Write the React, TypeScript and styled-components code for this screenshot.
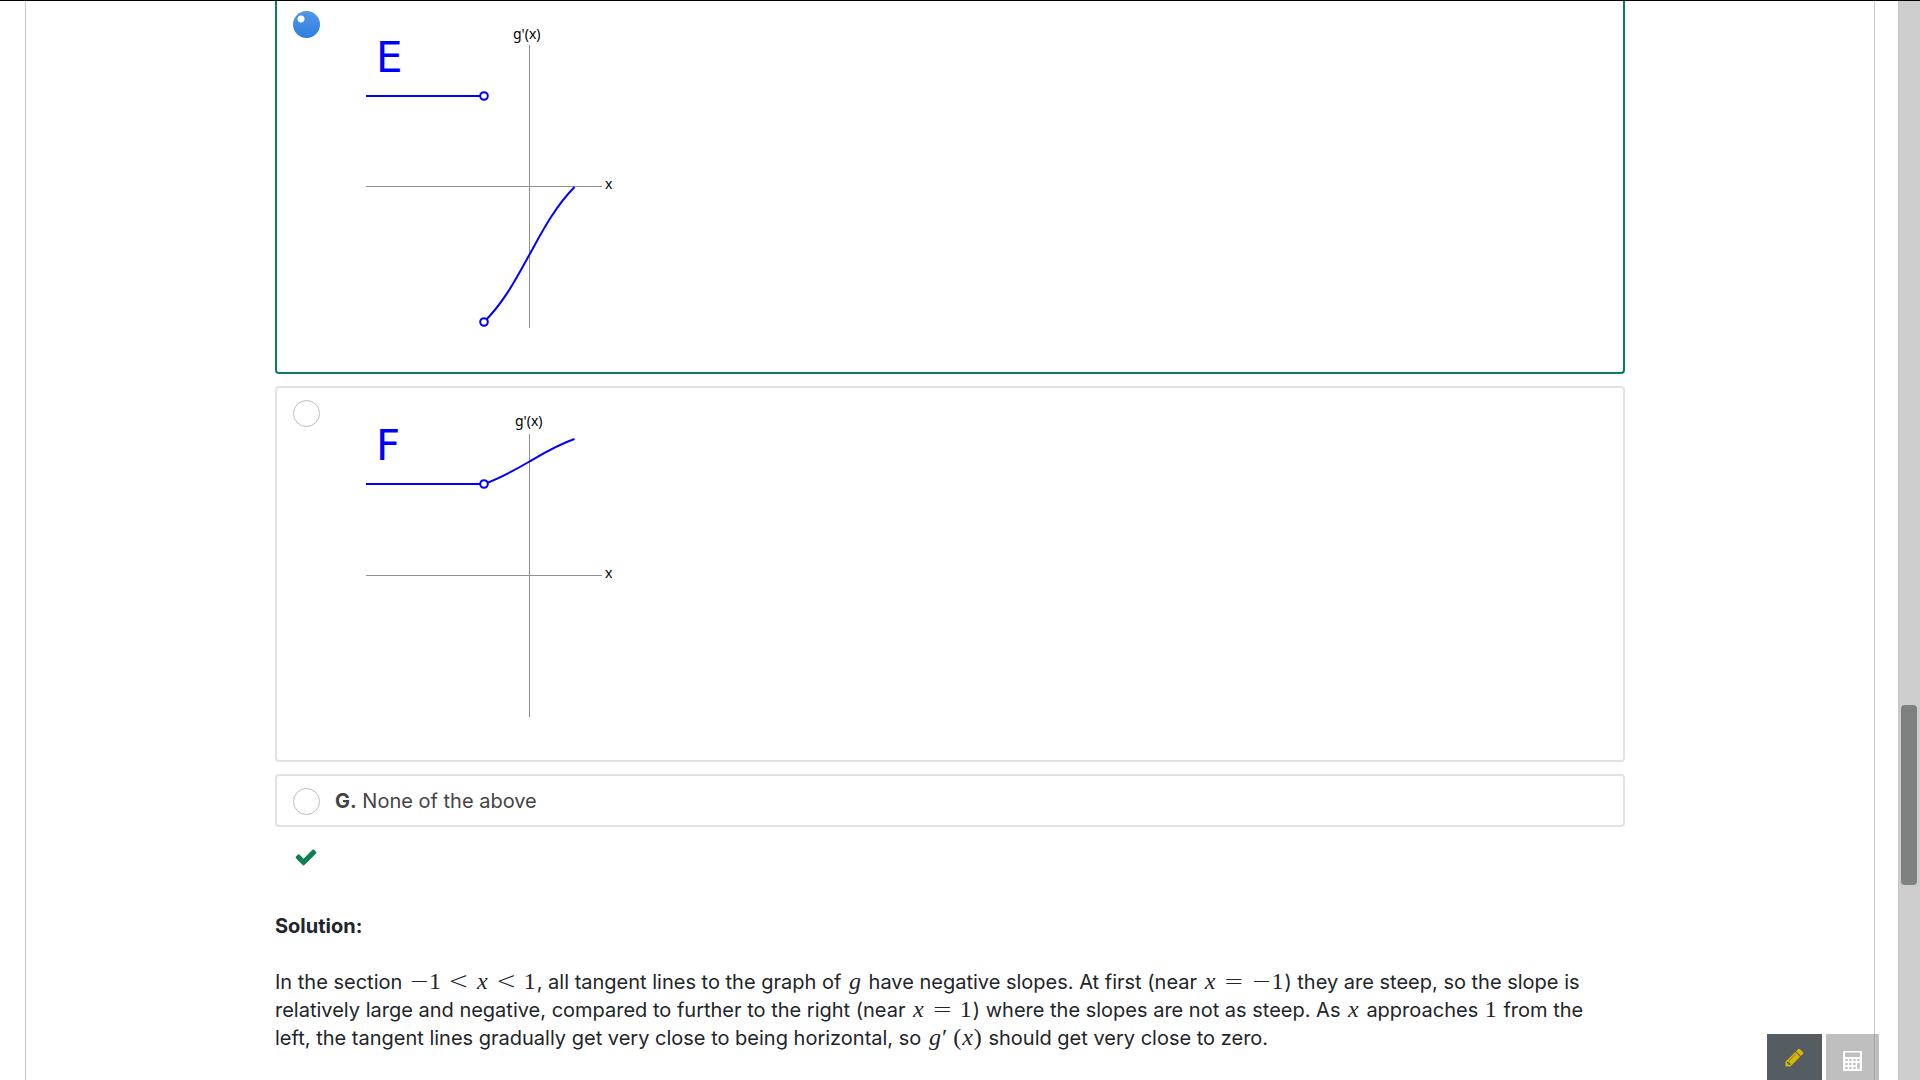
import React from 'react';
import styled, { createGlobalStyle } from 'styled-components';

const GlobalStyle = createGlobalStyle`
  *, *::before, *::after { box-sizing: border-box; }
  html, body { margin: 0; height: 100%; overflow: hidden; }
  body {
    background: #fff;
    color: #212529;
    font-family: Inter, "Liberation Sans", sans-serif;
    font-size: 20px;
    line-height: 28px;
  }
`;

const Shell = styled.div`
  display: flex;
  height: 100vh;
  border-top: 1px solid #000;
  overflow: hidden;
`;

const Page = styled.main`
  flex: 1;
  min-width: 0;
  margin: 0 23px 0 25px;
  padding: 0 249px;
  border: solid #c6c6c6;
  border-width: 0 1px;
`;

const ScrollTrack = styled.div`
  flex: none;
  display: flex;
  flex-direction: column;
  width: 22px;
  padding: 0 3px 0 2px;
  border-left: 1px solid #c8c8c4;
  background: #cdcdcd;
`;

const Spacer = styled.div<{ $grow: number }>`
  flex: ${(p) => p.$grow} 0 0;
`;

const Thumb = styled.div`
  height: 180px;
  border-radius: 4px;
  background: #7d8180;
`;

const Choices = styled.fieldset`
  display: flex;
  flex-direction: column;
  gap: 12px;
  min-width: 0;
  margin: 0;
  padding: 0;
  border: 0;
`;

const Choice = styled.label<{ $correct?: boolean; $continued?: boolean }>`
  display: flex;
  align-items: flex-start;
  gap: 15px;
  padding: ${(p) => (p.$continued ? '10px 16px 11px' : '12px 16px 10px')};
  border: 2px solid ${(p) => (p.$correct ? '#0b8050' : '#e2e2e2')};
  border-radius: 4px;
  color: #444;
  line-height: 27px;
  cursor: pointer;
  ${(p) => p.$continued && 'border-top: 0; border-top-left-radius: 0; border-top-right-radius: 0;'}
`;

const Radio = styled.input`
  appearance: none;
  flex: none;
  width: 27px;
  height: 27px;
  margin: 0;
  border: 1px solid #c3bcb6;
  border-radius: 50%;
  background: #fff;
  &:checked {
    border: 0;
    background:
      radial-gradient(circle at 8px 8px, #fff 3px, transparent 4px),
      linear-gradient(#5197e8, #2f7fe0);
  }
`;

const Plot = styled.svg`
  display: block;
  width: 300px;
  height: 350px;
  font-family: "Noto Sans", sans-serif;
  font-size: 14px;
`;

const PlotName = styled.text`
  font-family: "DejaVu Sans", sans-serif;
  font-size: 42px;
  fill: #00f;
`;

const Result = styled.div`
  display: flex;
  padding: 18px 19px 0;
  color: #0b8050;
`;

const Solution = styled.section`
  padding-top: 43px;
`;

const Heading = styled.h2`
  margin: 0 0 28px;
  font-size: 20px;
  line-height: 28px;
  font-weight: 700;
`;

const Text = styled.p`
  max-width: 1330px;
  margin: 0;
`;

const Math = styled.span`
  padding: 0 1px;
  font-family: "Liberation Serif", serif;
  font-size: 24px;
  line-height: 20px;
  white-space: nowrap;
`;

const Variable = styled.i`
  padding: 0 1px;
`;

const Relation = styled.span`
  display: inline-block;
  width: 35px;
  font-family: "DejaVu Sans", sans-serif;
  font-weight: 200;
  text-align: center;
`;

const Minus = styled.span`
  font-family: "DejaVu Sans", sans-serif;
  font-weight: 200;
`;

const Tools = styled.div`
  position: fixed;
  right: 41px;
  bottom: 0;
  display: flex;
  gap: 4px;
`;

const Tool = styled.button<{ $active?: boolean }>`
  display: flex;
  align-items: center;
  justify-content: center;
  width: ${(p) => (p.$active ? 55 : 53)}px;
  height: 46px;
  padding: ${(p) => (p.$active ? 0 : 8)}px 0 0;
  border: 0;
  background: ${(p) => (p.$active ? '#555d62' : 'rgba(128, 128, 128, 0.5)')};
  color: ${(p) => (p.$active ? '#d9b800' : '#fff')};
  cursor: pointer;
`;

type GraphProps = {
  name: string;
  nameY: number;
  labelX: number;
  labelY: number;
  level: number;
  curve: string;
  open: number[];
};

function Graph({ name, nameY, labelX, labelY, level, curve, open }: GraphProps) {
  return (
    <Plot viewBox="0 0 300 350" role="img" aria-label={`Graph ${name}`}>
      <path d="M31 175.5H267M194.5 34V317" stroke="#8f8f8f" fill="none" />
      <text x={labelX} y={labelY}>g'(x)</text>
      <text x={270} y={178}>x</text>
      <PlotName x={41} y={nameY}>{name}</PlotName>
      <g stroke="#00f" strokeWidth={2} fill="none">
        <path d={`M31 ${level}H149`} />
        <path d={curve} />
        {open.map((y) => (
          <circle key={y} cx={149} cy={y} r={3.8} fill="#fff" />
        ))}
      </g>
    </Plot>
  );
}

const keys = [
  [3.5, 9], [7.5, 9], [11.5, 9], [15.5, 9],
  [3.5, 13], [7.5, 13], [11.5, 13],
  [3.5, 17], [7.5, 17], [11.5, 17],
];

export default function App() {
  return (
    <>
      <GlobalStyle />
      <Shell>
        <Page>
          <Choices aria-label="Graph of the derivative">
            <Choice $correct $continued>
              <Radio type="radio" name="answer" defaultChecked />
              <Graph
                name="E"
                nameY={61}
                labelX={178}
                labelY={28}
                level={85}
                curve="M149 311C170 290 182 266 194.5 243.5S219 197 239.5 176"
                open={[85, 311]}
              />
            </Choice>
            <Choice>
              <Radio type="radio" name="answer" />
              <Graph
                name="F"
                nameY={60}
                labelX={180}
                labelY={26}
                level={84}
                curve="M149 84C166 78 180 70 194.5 61.5S222 45 239.5 39"
                open={[84]}
              />
            </Choice>
            <Choice>
              <Radio type="radio" name="answer" />
              <span><b>G.</b> None of the above</span>
            </Choice>
          </Choices>
          <Result>
            <svg width="24" height="24" viewBox="0 0 1792 1792" fill="currentColor" role="img" aria-label="Correct">
              <path d="M1671 566q0 40-28 68l-724 724-136 136q-28 28-68 28t-68-28l-136-136-362-362q-28-28-28-68t28-68l136-136q28-28 68-28t68 28l294 295 656-657q28-28 68-28t68 28l136 136q28 28 28 68z" />
            </svg>
          </Result>
          <Solution>
            <Heading>Solution:</Heading>
            <Text>
              In the section{' '}
              <Math>
                <Minus>−</Minus>1<Relation>&lt;</Relation><Variable>x</Variable><Relation>&lt;</Relation>1
              </Math>
              , all tangent lines to the graph of <Math><Variable>g</Variable></Math> have negative
              slopes. At first (near{' '}
              <Math><Variable>x</Variable><Relation>=</Relation><Minus>−</Minus>1</Math>) they are steep,
              so the slope is relatively large and negative, compared to further to the right
              (near <Math><Variable>x</Variable><Relation>=</Relation>1</Math>) where the slopes are not
              as steep. As <Math><Variable>x</Variable></Math> approaches <Math>1</Math> from the left,
              the tangent lines gradually get very close to being horizontal, so{' '}
              <Math><Variable>g</Variable>′ (<Variable>x</Variable>)</Math> should get very close to zero.
            </Text>
          </Solution>
        </Page>
        <ScrollTrack aria-hidden="true">
          <Spacer $grow={704} />
          <Thumb />
          <Spacer $grow={195} />
        </ScrollTrack>
      </Shell>
      <Tools>
        <Tool type="button" $active aria-label="Notes">
          <svg width="21" height="21" viewBox="0 0 1792 1792" fill="currentColor">
            <path d="M491 1536l91-91-235-235-91 91v107h128v128h107zm523-928q0-22-22-22-10 0-17 7l-542 542q-7 7-7 17 0 22 22 22 10 0 17-7l542-542q7-7 7-17zm-54-192l416 416-832 832h-416v-416zm683 96q0 53-37 90l-166 166-416-416 166-165q36-38 90-38 53 0 91 38l235 234q37 39 37 91z" />
          </svg>
        </Tool>
        <Tool type="button" aria-label="Calculator">
          <svg width="19" height="20" viewBox="0 0 19 20">
            <rect width="19" height="20" rx="1" fill="currentColor" />
            <g fill="#bfbfbf">
              <rect x="2" y="1.5" width="15" height="4.5" />
              {keys.map(([x, y]) => (
                <circle key={`${x}-${y}`} cx={x} cy={y} r="1.3" />
              ))}
              <rect x="14.2" y="11.7" width="2.6" height="6.6" rx="1.3" />
            </g>
          </svg>
        </Tool>
      </Tools>
    </>
  );
}
